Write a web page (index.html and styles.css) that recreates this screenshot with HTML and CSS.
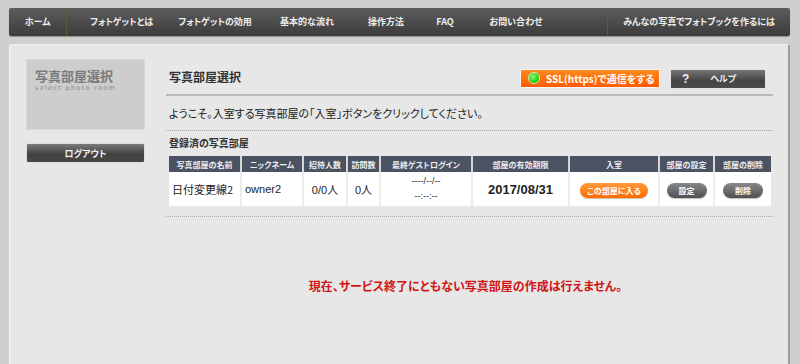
FILE: index.html
```html
<!DOCTYPE html>
<html lang="ja">
<head>
    <meta charset="utf-8">
    <title>写真部屋選択</title>
    <link rel="stylesheet" href="styles.css">
</head>
<body>
    <div class="page">
        <nav class="gnav">
            <a class="gnav-home">ホーム</a>
            <ul class="gnav-menu">
                <li class="m1">フォトゲットとは</li>
                <li class="m2">フォトゲットの効用</li>
                <li class="m3">基本的な流れ</li>
                <li class="m4">操作方法</li>
                <li class="m5">FAQ</li>
                <li class="m6">お問い合わせ</li>
            </ul>
            <a class="gnav-extra">みんなの写真でフォトブックを作るには</a>
        </nav>
        <div class="panel">
            <aside class="side">
                <div class="side-title">
                    <h2>写真部屋選択</h2>
                    <p>select photo room</p>
                </div>
                <button class="btn-logout">ログアウト</button>
            </aside>
            <main class="main">
                <div class="main-head">
                    <h1>写真部屋選択</h1>
                    <div class="head-btns">
                        <button class="btn-ssl"><span class="dot"></span>SSL(https)で通信をする</button>
                        <button class="btn-help"><span class="q">?</span><span class="label">ヘルプ</span></button>
                    </div>
                </div>
                <p class="welcome">ようこそ。入室する写真部屋の「入室」ボタンをクリックしてください。</p>
                <div class="rooms-box">
                    <h3 class="sec-title">登録済の写真部屋</h3>
                    <table class="rooms">
                        <thead>
                            <tr>
                                <th class="c-name">写真部屋の名前</th>
                                <th class="c-nick">ニックネーム</th>
                                <th class="c-inv">招待人数</th>
                                <th class="c-visit">訪問数</th>
                                <th class="c-login">最終ゲストログイン</th>
                                <th class="c-limit">部屋の有効期限</th>
                                <th class="c-enter">入室</th>
                                <th class="c-set">部屋の設定</th>
                                <th class="c-del">部屋の削除</th>
                            </tr>
                        </thead>
                        <tbody>
                            <tr>
                                <td class="left">日付変更線2</td>
                                <td class="left latin">owner2</td>
                                <td class="latin">0/0人</td>
                                <td class="latin">0人</td>
                                <td class="login latin">----/--/--<br>--:--:--</td>
                                <td class="limit">2017/08/31</td>
                                <td><button class="pill pill-orange">この部屋に入る</button></td>
                                <td><button class="pill pill-gray">設定</button></td>
                                <td><button class="pill pill-gray">削除</button></td>
                            </tr>
                        </tbody>
                    </table>
                </div>
                <p class="notice">現在、サービス終了にともない写真部屋の作成は行えません。</p>
            </main>
        </div>
    </div>
</body>
</html>
```

FILE: styles.css
```css
html, body {
    margin: 0;
    width: 800px;
    height: 364px;
    overflow: hidden;
}
body {
    background-color: #cfcfcf;
    font-family: "Noto Sans CJK JP", "Liberation Sans", sans-serif;
    font-feature-settings: "palt";
    color: #222;
}
.page {
    width: 781px;
    padding: 8px 0 0 9px;
}
button {
    font-family: inherit;
    font-feature-settings: "palt";
    border: none;
    cursor: pointer;
    padding: 0;
}

/* global navigation */
.gnav {
    display: flex;
    width: 781px;
    height: 28px;
    background: linear-gradient(#5c5c5c, #3c3c3c);
    border-radius: 2px;
    box-shadow: 0 1px 1px rgba(0, 0, 0, 0.3);
    color: #eee;
    font-size: 9px;
    font-weight: bold;
    line-height: 28px;
    white-space: nowrap;
}
.gnav-home {
    width: 57px;
    text-align: center;
    border-right: 1px solid #5d5a34;
}
.gnav-menu {
    display: flex;
    width: 540px;
    margin: 0;
    padding: 0 0 0 7px;
    box-sizing: border-box;
    list-style: none;
}
.gnav-menu li {
    text-align: center;
}
.gnav-menu .m1 { width: 95px; }
.gnav-menu .m2 { width: 92px; }
.gnav-menu .m3 { width: 92px; }
.gnav-menu .m4 { width: 66px; }
.gnav-menu .m5 { width: 52px; }
.gnav-menu .m6 { width: 90px; }
.gnav-extra {
    flex: 1;
    text-align: center;
    border-left: 1px solid #5d5a34;
}

/* panel */
.panel {
    display: flex;
    box-sizing: border-box;
    width: 781px;
    height: 320px;
    margin-top: 8px;
    padding: 14px 15px 0 16px;
    background-color: #e7e7e7;
    border-left: 1px solid #f4f4f4;
    border-right: 2px solid #9e9e9e;
    border-top: 1px solid #f0f0f0;
    border-radius: 3px 3px 0 0;
    overflow: hidden;
}
.side {
    width: 119px;
    flex-shrink: 0;
}
.side-title {
    height: 71px;
    padding: 8px 8px 0;
    box-sizing: border-box;
    background-color: #cdcdcd;
    border: 1px solid #d8d8d8;
}
.side-title h2 {
    margin: 0;
    font-size: 13px;
    font-weight: bold;
    line-height: 15px;
    color: #7b7b7b;
}
.side-title p {
    margin: 1px 0 0;
    font-family: "DejaVu Sans", sans-serif;
    font-size: 6.5px;
    letter-spacing: 1.3px;
    color: #8a8a8a;
}
.btn-logout {
    display: block;
    width: 119px;
    height: 20px;
    margin-top: 13px;
    background: linear-gradient(#7a7a7a, #3f3f3f 60%, #4a4a4a);
    border: 1px solid #ddd;
    border-radius: 2px;
    color: #f2f2f2;
    font-size: 9px;
    font-weight: bold;
}

.main {
    flex: 1;
    min-width: 0;
    margin-left: 21px;
}
.main-head {
    display: flex;
    align-items: center;
    justify-content: space-between;
    height: 35px;
    padding: 0 7px 0 3px;
    border-bottom: 2px solid #b9b9b9;
}
.main-head h1 {
    margin: 0;
    font-size: 12px;
    font-weight: bold;
    color: #333;
}
.head-btns {
    display: flex;
    gap: 10px;
    margin-top: 4px;
}
.btn-ssl {
    display: flex;
    align-items: center;
    width: 140px;
    height: 19px;
    padding-left: 7px;
    box-sizing: border-box;
    background: linear-gradient(#ff8a1e, #ff5a00);
    border: 1px solid #f7f7f7;
    color: #fff;
    font-size: 10px;
    font-weight: bold;
}
.btn-ssl .dot {
    width: 10px;
    height: 10px;
    margin-right: 6px;
    border-radius: 50%;
    background: radial-gradient(circle at 40% 35%, #8aff6a, #19c800 70%);
    border: 1px solid #c8f0c0;
}
.btn-help {
    display: flex;
    align-items: center;
    width: 96px;
    height: 20px;
    padding-left: 11px;
    box-sizing: border-box;
    background: linear-gradient(#767676, #444 60%, #4c4c4c);
    border: 1px solid #e4e4e4;
    color: #f0f0f0;
    font-size: 9px;
    font-weight: bold;
}
.btn-help .q {
    font-family: "Liberation Sans", sans-serif;
    font-size: 12px;
}
.btn-help .label {
    flex: 1;
    text-align: center;
    padding-right: 8px;
}

.welcome {
    margin: 0;
    height: 34px;
    padding-left: 3px;
    line-height: 34px;
    font-size: 11px;
    color: #222;
    border-bottom: 1px dotted #a8a8a8;
}
.rooms-box {
    padding: 5px 0 10px 3px;
    border-bottom: 1px dotted #a8a8a8;
}
.sec-title {
    margin: 0 0 6px;
    font-size: 10px;
    font-weight: bold;
    line-height: 14px;
    color: #333;
}
.rooms {
    width: 602px;
    border-collapse: collapse;
    table-layout: fixed;
    background-color: #fff;
}
.rooms th {
    height: 16px;
    padding: 0;
    background-color: #4b5262;
    color: #eceef2;
    font-size: 8px;
    font-weight: bold;
    border-right: 2px solid #d6d6d6;
    white-space: nowrap;
}
.rooms th:last-child,
.rooms td:last-child {
    border-right: none;
}
.rooms td {
    height: 34px;
    padding: 0;
    text-align: center;
    font-size: 11px;
    color: #222;
    border-right: 2px solid #ececec;
}
.rooms td.left {
    text-align: left;
    padding-left: 3px;
}
.rooms .latin {
    font-family: "Liberation Sans", "Noto Sans CJK JP", sans-serif;
}
.rooms td.login {
    font-size: 9px;
    line-height: 15px;
}
.rooms td.limit {
    font-family: "Liberation Sans", sans-serif;
    font-size: 13px;
    font-weight: bold;
}
.c-name { width: 71px; }
.c-nick { width: 60px; }
.c-inv { width: 42px; }
.c-visit { width: 31px; }
.c-login { width: 90px; }
.c-limit { width: 95px; }
.c-enter { width: 88px; }
.c-set { width: 53px; }
.c-del { width: 56px; }

.pill {
    height: 15px;
    border-radius: 8px;
    color: #fff;
    font-size: 8px;
    font-weight: bold;
    box-shadow: 0 1px 1px rgba(0, 0, 0, 0.25);
}
.pill-orange {
    width: 68px;
    background: linear-gradient(#ff9a3a, #ff6a00);
}
.pill-gray {
    width: 40px;
    background: linear-gradient(#888, #4f4f4f);
}

.notice {
    margin: 60px 0 0;
    padding-right: 8px;
    text-align: center;
    font-size: 12px;
    font-weight: bold;
    color: #d01515;
}
```
